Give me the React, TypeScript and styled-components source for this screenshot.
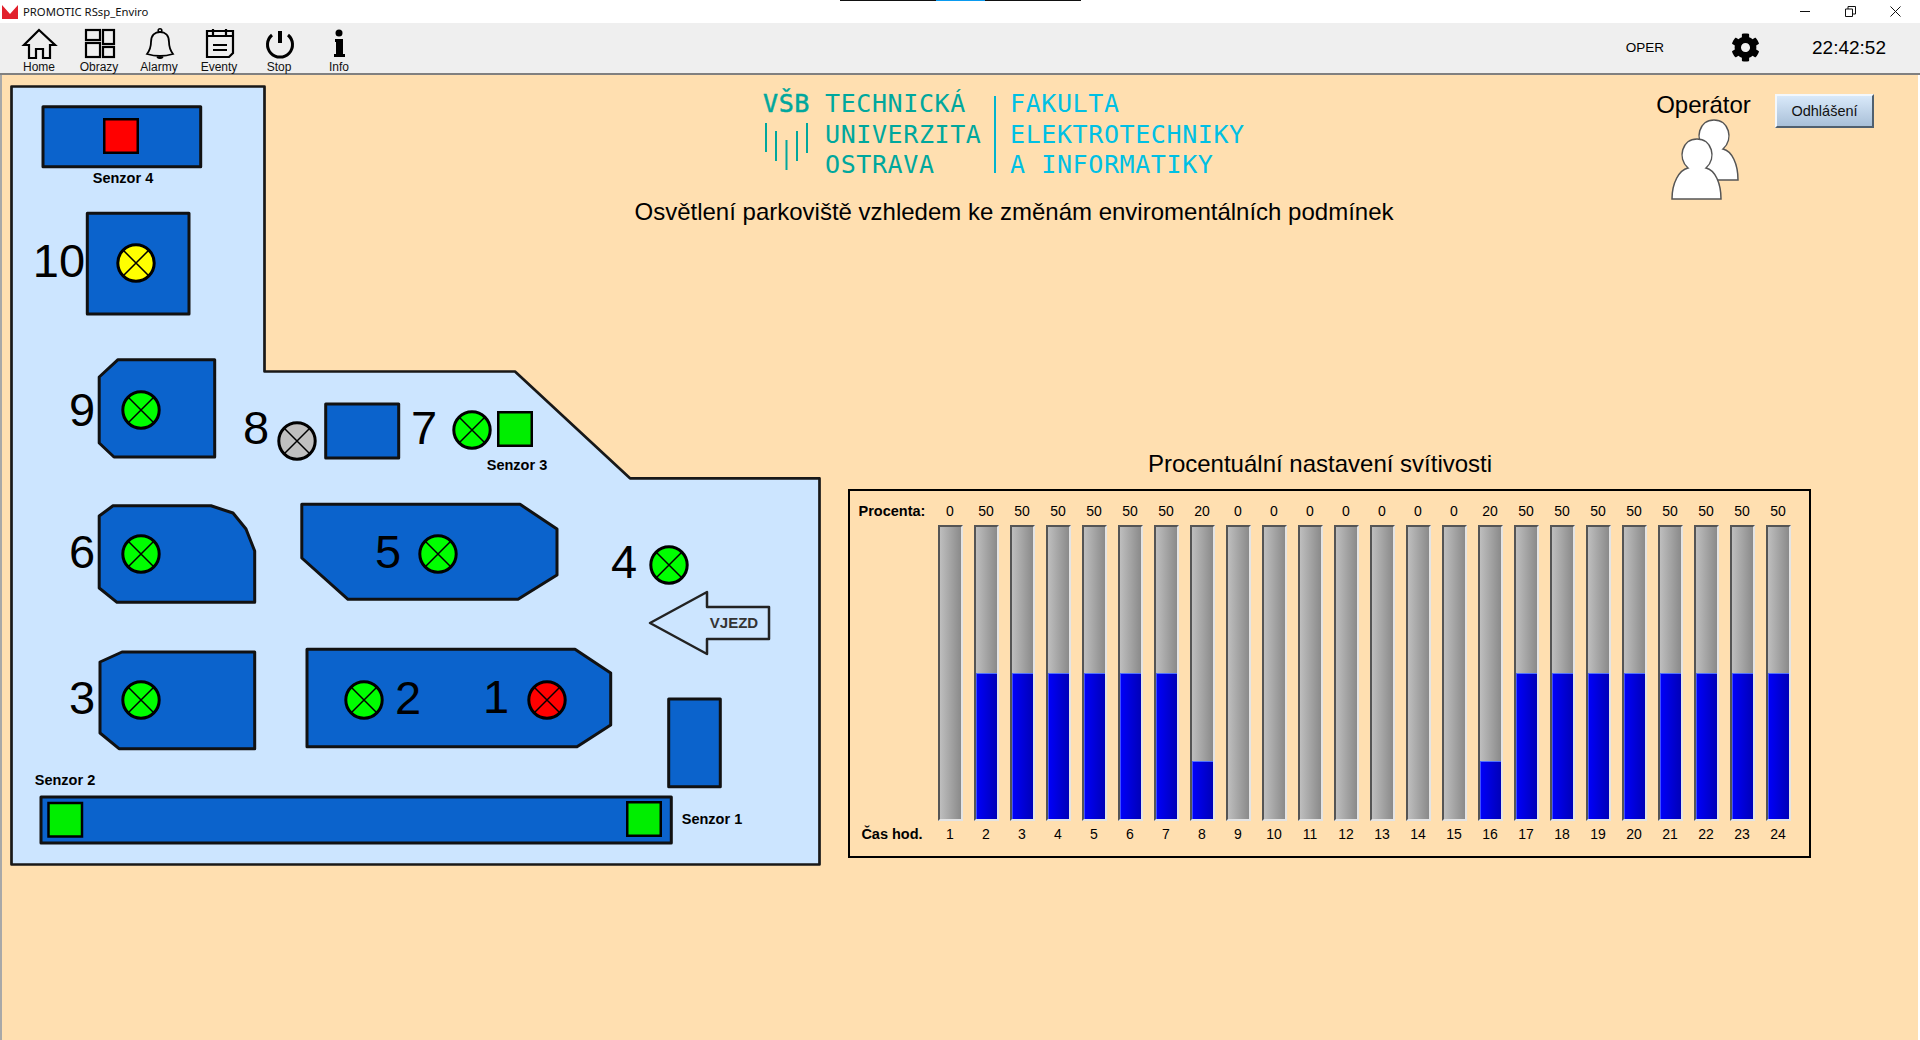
import styled, { createGlobalStyle } from "styled-components"
import { FaCog } from "react-icons/fa"

const GlobalStyle = createGlobalStyle`
  html, body {
    margin: 0;
    height: 100%;
    overflow: hidden;
    background: #ffdfb0;
    font-family: "Liberation Sans", Arial, sans-serif;
    color: #000;
  }
`

const Window = styled.div`
  display: flex;
  flex-direction: column;
  width: 1920px;
  height: 1040px;
`

const TitleBar = styled.div`
  position: relative;
  display: flex;
  align-items: center;
  flex: 0 0 23px;
  padding-left: 2px;
  background: #fff;
`

const LoadStrip = styled.div`
  position: absolute;
  top: 0;
  left: 840px;
  width: 241px;
  height: 1px;
  background: linear-gradient(90deg, #111 40%, #0a9bf0 40%, #0a9bf0 60%, #111 60%);
`

const AppName = styled.span`
  margin-left: 5px;
  font-family: "Noto Sans", sans-serif;
  font-size: 11.3px;
  color: #111;
`

const WindowButtons = styled.div`
  display: flex;
  margin-left: auto;
  margin-right: 2px;
`

const WindowButton = styled.div`
  display: flex;
  align-items: center;
  justify-content: center;
  width: 45px;
  height: 21px;
`

const Toolbar = styled.div`
  display: flex;
  align-items: center;
  flex: 0 0 52px;
  min-height: 0;
  box-sizing: border-box;
  padding: 0 0 1px 9px;
  background: #efefef;
  border-bottom: 2px solid #808080;
`

const ToolButton = styled.div`
  display: flex;
  flex-direction: column;
  align-items: center;
  align-self: flex-start;
  width: 60px;
  margin-top: 4px;
  font-size: 12px;
  line-height: 13px;
  color: #111;
`

const ToolStatus = styled.div`
  display: flex;
  align-items: center;
  margin-left: auto;
  padding-right: 34px;
`

const UserCode = styled.span`
  margin-right: 67px;
  font-size: 13.5px;
`

const GearWrap = styled.div`
  display: flex;
  margin-right: 52px;
  font-size: 29px;
`

const Clock = styled.span`
  font-size: 19px;
`

const Main = styled.div`
  display: grid;
  flex: 1;
  box-sizing: border-box;
  border-left: 2px solid #a8a8a8;
  border-right: 2px solid #fff;
  background: #ffdfb0;
`

const Plan = styled.div`
  position: relative;
  grid-area: 1 / 1;
  justify-self: start;
  align-self: start;
  width: 811px;
  height: 783px;
  margin: 9px 0 0 8px;
`

const PlanDrawing = styled.svg`
  display: block;
  width: 811px;
  height: 783px;
`

const Outline = styled.polygon`
  fill: #cce5ff;
  stroke: #181818;
  stroke-width: 2.7;
  stroke-linejoin: round;
`

const Block = styled.polygon`
  fill: #0b63cc;
  stroke: #111;
  stroke-width: 3;
  stroke-linejoin: round;
`

const Arrow = styled.polygon`
  fill: #cce5ff;
  stroke: #222;
  stroke-width: 2.5;
  stroke-linejoin: round;
`

const PlaceNumber = styled.span<{ $x: number; $y: number }>`
  position: absolute;
  left: ${(p) => p.$x - 10}px;
  top: ${(p) => p.$y - 84}px;
  transform: translate(-50%, -50%);
  font-size: 47px;
  line-height: 1;
`

const SensorLabel = styled.span<{ $x: number; $y: number }>`
  position: absolute;
  left: ${(p) => p.$x - 10}px;
  top: ${(p) => p.$y - 84}px;
  transform: translate(-50%, -50%);
  font-size: 14.5px;
  font-weight: 700;
  line-height: 1;
  white-space: nowrap;
`

const EntryLabel = styled(SensorLabel)`
  font-size: 15px;
  color: #333;
`

const Overlay = styled.div`
  grid-area: 1 / 1;
  display: flex;
  flex-direction: column;
  pointer-events: none;
`

const Header = styled.div`
  display: flex;
  align-items: flex-start;
  height: 150px;
  padding-left: 633px;
`

const Heading = styled.div`
  display: flex;
  flex-direction: column;
  align-items: center;
  width: 758px;
`

const Logo = styled.div`
  display: flex;
  align-self: flex-start;
  margin: 14px 0 0 128px;
  font-family: "DejaVu Sans Mono", monospace;
  font-size: 25px;
  letter-spacing: 0.6px;
  line-height: 30.5px;
`

const LogoMark = styled.div`
  display: flex;
  flex-direction: column;
  width: 62px;
  color: #00a79d;
  -webkit-text-stroke: 0.5px #00a79d;
`

const LogoBarsDrawing = styled.svg`
  display: block;
  margin-top: 3px;
`

const LogoUniversity = styled.div`
  width: 169px;
  color: #00a79d;
`

const LogoFaculty = styled.div`
  height: 77px;
  margin-top: 7px;
  padding-left: 14px;
  border-left: 2px solid #00b4cf;
  color: #00c0e4;
`

const FacultyLines = styled.div`
  margin-top: -7px;
`

const PageTitle = styled.h1`
  margin: 18px 0 0;
  font-size: 24px;
  font-weight: 400;
  line-height: 26px;
  white-space: nowrap;
`

const OperatorBox = styled.div`
  display: flex;
  flex-direction: column;
  align-items: center;
  width: 93px;
  margin: 15px 0 0 264px;
`

const OperatorName = styled.div`
  margin-bottom: -2px;
  font-size: 24px;
  line-height: 30px;
  white-space: nowrap;
`

const UsersDrawing = styled.svg`
  display: block;
  margin-left: 4px;
`

const LogoutButton = styled.div`
  display: flex;
  align-items: center;
  justify-content: center;
  width: 99px;
  height: 34px;
  margin: 19px 0 0 25px;
  box-sizing: border-box;
  border: 2px solid;
  border-color: #f4f8fc #50606f #50606f #f4f8fc;
  background: linear-gradient(#d9e9fa, #a9c0d8);
  font-size: 14.5px;
  color: #111;
`

const ChartSection = styled.div`
  display: flex;
  flex-direction: column;
  width: 963px;
  margin: 226px 0 0 846px;
`

const ChartTitle = styled.h2`
  margin: 0 19px 12px 0;
  font-size: 24px;
  font-weight: 400;
  line-height: 26px;
  text-align: center;
`

const ChartFrame = styled.div`
  display: flex;
  box-sizing: border-box;
  height: 369px;
  padding: 11px 0 13px;
  border: 2px solid #000;
`

const RowLabels = styled.div`
  display: flex;
  flex-direction: column;
  justify-content: space-between;
  align-items: center;
  width: 82px;
  margin: 0 5px 0 1px;
  font-size: 14.5px;
  font-weight: 700;
  line-height: 18px;
`

const Columns = styled.div`
  display: flex;
  gap: 11px;
`

const Column = styled.div`
  display: flex;
  flex-direction: column;
  align-items: center;
  width: 25px;
  font-size: 14px;
  line-height: 18px;
`

const ColumnText = styled.span`
  margin-left: -1px;
`

const Track = styled.div`
  display: flex;
  flex-direction: column;
  justify-content: flex-end;
  box-sizing: border-box;
  width: 25px;
  height: 296px;
  margin: 5px 0 4px;
  border: 2px solid;
  border-color: #555 #e4e4e4 #e4e4e4 #555;
  background: linear-gradient(90deg, #bebebe, #8a8a8a);
`

const Fill = styled.div`
  box-sizing: border-box;
  border-top: 1px solid #5070ff;
  border-left: 1px solid #4050ff;
  background: linear-gradient(90deg, #0000f8, #0000b8);
`

const ICON_STROKE = { fill: "none", stroke: "#000", strokeWidth: 2.2 }

function HomeIcon() {
  return (
    <svg width="40" height="34" viewBox="0 0 40 34">
      <path {...ICON_STROKE} d="M20 3 L36 18 H31 V31 H24 V22 H17 V31 H10 V18 H5 Z" />
    </svg>
  )
}

function ScreensIcon() {
  return (
    <svg width="40" height="34" viewBox="0 0 40 34">
      <g {...ICON_STROKE}>
        <rect x="7" y="3" width="14" height="10" />
        <rect x="7" y="16" width="14" height="14" />
        <rect x="24" y="3" width="11" height="14" />
        <rect x="24" y="20" width="11" height="10" />
      </g>
    </svg>
  )
}

function BellIcon() {
  return (
    <svg width="40" height="34" viewBox="0 0 40 34">
      <path
        {...ICON_STROKE}
        strokeWidth={1.8}
        d="M8 27 C11 23 12 20 12 15 C12 8 16 5 21 5 C26 5 30 8 30 15 C30 20 31 23 34 27 Q21 31 8 27 Z"
      />
      <circle cx="21" cy="3.5" r="1.8" {...ICON_STROKE} strokeWidth={1.6} />
      <path d="M18 30 Q21 32 24 30" {...ICON_STROKE} strokeWidth={1.8} />
    </svg>
  )
}

function EventsIcon() {
  return (
    <svg width="40" height="34" viewBox="0 0 40 34">
      <g {...ICON_STROKE}>
        <path d="M8 4 H34 V26 L30 30 H8 Z" />
        <path d="M8 9 H34 M14 2 V8 M27 2 V8 M14 18 H28 M14 23 H28" />
      </g>
    </svg>
  )
}

function PowerIcon() {
  return (
    <svg width="40" height="34" viewBox="0 0 40 34">
      <path d="M13 8 A12.5 12.5 0 1 0 29 8" fill="none" stroke="#000" strokeWidth={3} />
      <rect x="19" y="4" width="4" height="12" />
    </svg>
  )
}

function InfoIcon() {
  return (
    <svg width="40" height="34" viewBox="0 0 40 34">
      <circle cx="20" cy="6" r="3.5" />
      <path d="M16 12 H24 V27 H26 V30 H15 V27 H17 V15 H16 Z" />
    </svg>
  )
}

const TOOLS = [
  { label: "Home", icon: <HomeIcon /> },
  { label: "Obrazy", icon: <ScreensIcon /> },
  { label: "Alarmy", icon: <BellIcon /> },
  { label: "Eventy", icon: <EventsIcon /> },
  { label: "Stop", icon: <PowerIcon /> },
  { label: "Info", icon: <InfoIcon /> },
]

const BLOCKS = [
  "43,106.8 200.7,106.8 200.7,166.7 43,166.7",
  "87.3,213.3 189,213.3 189,314 87.3,314",
  "118,359.7 214.7,359.7 214.7,457 114,457 99.2,443 99.2,377",
  "325.7,404 398.7,404 398.7,458 325.7,458",
  "113,505.8 211,505.8 233,513 246,529 254.7,551 254.7,602.3 117,602.3 99.2,588 99.2,516",
  "301.8,504.3 520,504.3 557,529 557,575 518,599.3 348,599.3 301.8,558",
  "122,652 254.7,652 254.7,748.7 119,748.7 100,733 100,662",
  "307,649.3 575,649.3 610.7,673 610.7,725 577,746.7 307,746.7",
  "668.7,699 720.3,699 720.3,786.7 668.7,786.7",
  "41,797 671.3,797 671.3,843 41,843",
]

const LAMPS = [
  { x: 136, y: 263, color: "#ffff00" },
  { x: 141, y: 410, color: "#00ff00" },
  { x: 297, y: 441, color: "#c0c0c0" },
  { x: 472, y: 430, color: "#00ff00" },
  { x: 141, y: 554, color: "#00ff00" },
  { x: 438, y: 554, color: "#00ff00" },
  { x: 669, y: 565, color: "#00ff00" },
  { x: 141, y: 700, color: "#00ff00" },
  { x: 364, y: 700, color: "#00ff00" },
  { x: 547, y: 700, color: "#ff0000" },
]

const SENSORS = [
  { x: 104.25, y: 119.25, color: "#ff0000" },
  { x: 498.25, y: 412.25, color: "#00ee00" },
  { x: 48.5, y: 803, color: "#00ee00" },
  { x: 627.25, y: 802.25, color: "#00ee00" },
]

const NUMBERS = [
  { n: "10", x: 59, y: 260 },
  { n: "9", x: 82, y: 409 },
  { n: "8", x: 256, y: 427 },
  { n: "7", x: 424, y: 427 },
  { n: "6", x: 82, y: 551 },
  { n: "5", x: 388, y: 551 },
  { n: "4", x: 624, y: 561 },
  { n: "3", x: 82, y: 697 },
  { n: "2", x: 408, y: 697 },
  { n: "1", x: 496, y: 696 },
]

const SENSOR_LABELS = [
  { text: "Senzor 4", x: 123, y: 177.5 },
  { text: "Senzor 3", x: 517, y: 465 },
  { text: "Senzor 2", x: 65, y: 780 },
  { text: "Senzor 1", x: 712, y: 819 },
]

const PERCENT = [0, 50, 50, 50, 50, 50, 50, 20, 0, 0, 0, 0, 0, 0, 0, 20, 50, 50, 50, 50, 50, 50, 50, 50]

function Lamp({ x, y, color }: { x: number; y: number; color: string }) {
  const d = 13
  return (
    <g>
      <circle cx={x} cy={y} r={18.2} fill={color} stroke="#000" strokeWidth={3} />
      <path
        d={`M${x - d} ${y - d} L${x + d} ${y + d} M${x + d} ${y - d} L${x - d} ${y + d}`}
        stroke="#000"
        strokeWidth={1.5}
      />
    </g>
  )
}

function ParkingPlan() {
  return (
    <Plan>
      <PlanDrawing viewBox="10 84 811 783">
        <Outline points="11.5,86.5 264.5,86.5 264.5,371.5 515,371.5 630,478.3 819.5,478.3 819.5,864.5 11.5,864.5" />
        {BLOCKS.map((points) => (
          <Block key={points} points={points} />
        ))}
        <Arrow points="650,623 707,592 707,607 769,607 769,639 707,639 707,654" />
        {LAMPS.map((lamp) => (
          <Lamp key={`${lamp.x}-${lamp.y}`} {...lamp} />
        ))}
        {SENSORS.map((s) => (
          <rect key={s.x} x={s.x} y={s.y} width={33.5} height={33.5} fill={s.color} stroke="#000" strokeWidth={2.5} />
        ))}
      </PlanDrawing>
      {NUMBERS.map((item) => (
        <PlaceNumber key={item.n} $x={item.x} $y={item.y}>
          {item.n}
        </PlaceNumber>
      ))}
      {SENSOR_LABELS.map((item) => (
        <SensorLabel key={item.text} $x={item.x} $y={item.y}>
          {item.text}
        </SensorLabel>
      ))}
      <EntryLabel $x={734} $y={622}>
        VJEZD
      </EntryLabel>
    </Plan>
  )
}

function Bar({ value }: { value: number }) {
  return <Track>{value > 0 && <Fill style={{ height: `${value}%` }} />}</Track>
}

function LightingChart() {
  return (
    <ChartSection>
      <ChartTitle>Procentuální nastavení svítivosti</ChartTitle>
      <ChartFrame>
        <RowLabels>
          <span>Procenta:</span>
          <span>Čas hod.</span>
        </RowLabels>
        <Columns>
          {PERCENT.map((value, i) => (
            <Column key={i}>
              <ColumnText>{value}</ColumnText>
              <Bar value={value} />
              <ColumnText>{i + 1}</ColumnText>
            </Column>
          ))}
        </Columns>
      </ChartFrame>
    </ChartSection>
  )
}

function UsersIcon() {
  const person = "M19 50 C8 40 13 21 28 21 C43 21 48 40 37 50 C46 52 52 65 52 81 H3 C3 65 10 52 19 50 Z"
  return (
    <UsersDrawing width="73" height="84" viewBox="0 0 73 84">
      <path d={person} transform="translate(17 -19)" fill="#fff" stroke="#555" strokeWidth={1.5} />
      <path d={person} fill="#fff" stroke="#555" strokeWidth={1.5} />
    </UsersDrawing>
  )
}

function LogoBars() {
  return (
    <LogoBarsDrawing width="48" height="50" viewBox="0 0 48 50">
      <path
        d="M3 0 V29 M13 8 V38 M23.5 17 V47 M34 8 V38 M44 0 V30"
        fill="none"
        stroke="#00a79d"
        strokeWidth={2}
      />
    </LogoBarsDrawing>
  )
}

export default function App() {
  return (
    <Window>
      <GlobalStyle />
      <TitleBar>
        <LoadStrip />
        <svg width="16" height="14" viewBox="0 0 16 14">
          <polygon points="0,0 8,9 16,0 16,14 0,14" fill="#e2202c" />
        </svg>
        <AppName>PROMOTIC RSsp_Enviro</AppName>
        <WindowButtons>
          <WindowButton>
            <svg width="11" height="11" viewBox="0 0 11 11">
              <path d="M0 5.5 H10" stroke="#111" />
            </svg>
          </WindowButton>
          <WindowButton>
            <svg width="11" height="11" viewBox="0 0 11 11">
              <path d="M0.5 3 H7.5 V10.5 H0.5 Z M3 3 V0.5 H10.5 V8 H7.5" fill="none" stroke="#111" />
            </svg>
          </WindowButton>
          <WindowButton>
            <svg width="11" height="11" viewBox="0 0 11 11">
              <path d="M0.5 0.5 L10.5 10.5 M10.5 0.5 L0.5 10.5" stroke="#111" />
            </svg>
          </WindowButton>
        </WindowButtons>
      </TitleBar>
      <Toolbar>
        {TOOLS.map((tool) => (
          <ToolButton key={tool.label}>
            {tool.icon}
            <span>{tool.label}</span>
          </ToolButton>
        ))}
        <ToolStatus>
          <UserCode>OPER</UserCode>
          <GearWrap>
            <FaCog />
          </GearWrap>
          <Clock>22:42:52</Clock>
        </ToolStatus>
      </Toolbar>
      <Main>
        <ParkingPlan />
        <Overlay>
          <Header>
            <Heading>
              <Logo>
                <LogoMark>
                  <span>VŠB</span>
                  <LogoBars />
                </LogoMark>
                <LogoUniversity>
                  TECHNICKÁ
                  <br />
                  UNIVERZITA
                  <br />
                  OSTRAVA
                </LogoUniversity>
                <LogoFaculty>
                  <FacultyLines>
                    FAKULTA
                    <br />
                    ELEKTROTECHNIKY
                    <br />A INFORMATIKY
                  </FacultyLines>
                </LogoFaculty>
              </Logo>
              <PageTitle>Osvětlení parkoviště vzhledem ke změnám enviromentálních podmínek</PageTitle>
            </Heading>
            <OperatorBox>
              <OperatorName>Operátor</OperatorName>
              <UsersIcon />
            </OperatorBox>
            <LogoutButton>Odhlášení</LogoutButton>
          </Header>
          <LightingChart />
        </Overlay>
      </Main>
    </Window>
  )
}
